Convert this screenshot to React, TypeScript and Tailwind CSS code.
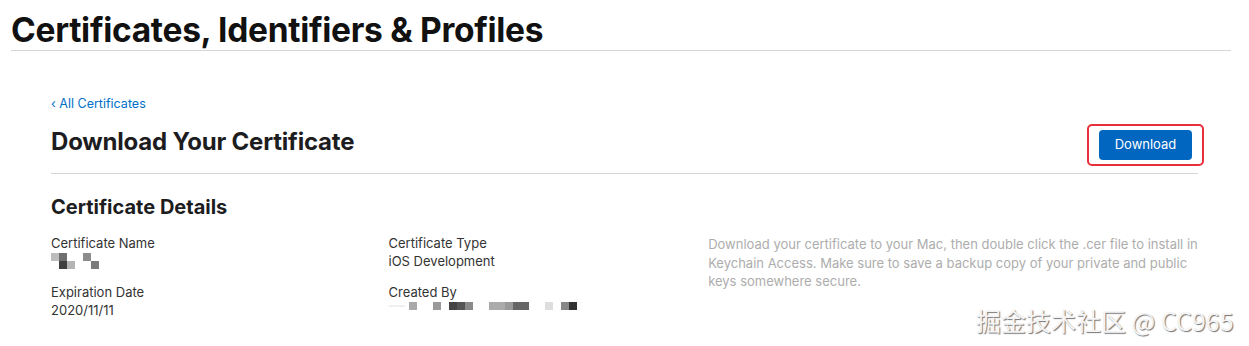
import React from 'react';

const font = "font-['Inter','Liberation_Sans',sans-serif]";

// blurred-out blocks from the screenshot
const nameBlocks = [
  { x: 0, y: 0, w: 8, h: 8, c: '#bdbdbd' },
  { x: 8, y: 0, w: 8, h: 8, c: '#6f6f6f' },
  { x: 8, y: 8, w: 8, h: 8, c: '#3f3f3f' },
  { x: 16, y: 8, w: 8, h: 8, c: '#b4b4b4' },
  { x: 32, y: 0, w: 8, h: 8, c: '#8c8c8c' },
  { x: 40, y: 8, w: 8, h: 8, c: '#7a7a7a' },
];

const creatorBlocks = [
  { x: 0, y: 3, w: 16, h: 2, c: '#efefef' },
  { x: 20, y: 0, w: 8, h: 8, c: '#a9a9a9' },
  { x: 44, y: 0, w: 8, h: 8, c: '#9a9a9a' },
  { x: 60, y: 0, w: 8, h: 8, c: '#444' },
  { x: 68, y: 0, w: 8, h: 8, c: '#555' },
  { x: 76, y: 0, w: 8, h: 8, c: '#8a8a8a' },
  { x: 100, y: 0, w: 16, h: 8, c: '#ababab' },
  { x: 116, y: 0, w: 8, h: 8, c: '#999' },
  { x: 124, y: 0, w: 16, h: 8, c: '#666' },
  { x: 156, y: 0, w: 8, h: 8, c: '#ddd' },
  { x: 172, y: 0, w: 8, h: 8, c: '#888' },
  { x: 180, y: 0, w: 8, h: 8, c: '#333' },
];

const Pixels = ({ blocks, w }: { blocks: typeof nameBlocks; w: number }) => (
  <svg width={w} height={16} className="block">
    {blocks.map((b, i) => (
      <rect key={i} x={b.x} y={b.y} width={b.w} height={b.h} fill={b.c} />
    ))}
  </svg>
);

const Field = ({ label, children }: { label: string; children: React.ReactNode }) => (
  <div className="flex flex-col">
    <div className="text-[13px] leading-[18px] text-[#333]">{label}</div>
    <div className="text-[13px] leading-[18px] text-[#333] h-[18px] flex items-center">{children}</div>
  </div>
);

export default function App() {
  return (
    <div className={`relative w-[1249px] h-[346px] bg-white overflow-hidden ${font}`}>
      {/* Page title */}
      <div className="mx-[11px] pt-[11px] border-b border-[#d6d6d6] w-[1220px]">
        <h1 className="text-[33.5px] leading-[38px] font-bold text-[#111] tracking-[-0.3px] pb-[1px]">
          Certificates, Identifiers &amp; Profiles
        </h1>
      </div>

      <div className="ml-[51px] w-[1147px] pt-[45px]">
        <a className="text-[12.5px] leading-[16px] text-[#0070c9] block">‹ All Certificates</a>

        <div className="flex items-center justify-between border-b border-[#d6d6d6] h-[61px] mt-[1px]">
          <h2 className="text-[24px] font-bold text-[#1d1d1f] tracking-[-0.2px] pb-[2px]">Download Your Certificate</h2>
          <div className="border-2 border-[#e8303d] rounded-[5px] px-[10px] py-[4px] mr-[-6px] mt-[3px]">
            <button className="bg-[#0066c0] text-white text-[13px] rounded-[4px] w-[93px] h-[30px] block">
              Download
            </button>
          </div>
        </div>

        <h3 className="text-[20px] font-bold text-[#1d1d1f] mt-[21px] leading-[24px]">Certificate Details</h3>

        <div className="flex mt-[15px]">
          <div className="w-[339px] flex flex-col gap-[13px]">
            <Field label="Certificate Name">
              <Pixels blocks={nameBlocks} w={48} />
            </Field>
            <Field label="Expiration Date">2020/11/11</Field>
          </div>
          <div className="w-[321px] flex flex-col gap-[13px]">
            <Field label="Certificate Type">iOS Development</Field>
            <Field label="Created By">
              <Pixels blocks={creatorBlocks} w={190} />
            </Field>
          </div>
          <p className="w-[492px] text-[13px] leading-[18.5px] text-[#adadad] pt-[1px]">
            Download your certificate to your Mac, then double click the .cer file to install in Keychain
            Access. Make sure to save a backup copy of your private and public keys somewhere secure.
          </p>
        </div>
      </div>

      {/* watermark */}
      <div className="absolute left-[976px] top-[302px] text-[25px] text-[#f4f4f4] font-['Noto_Sans_CJK_SC',sans-serif] [text-shadow:1px_1px_1px_rgba(0,0,0,0.55)]">
        掘金技术社区 @ CC965
      </div>
    </div>
  );
}
